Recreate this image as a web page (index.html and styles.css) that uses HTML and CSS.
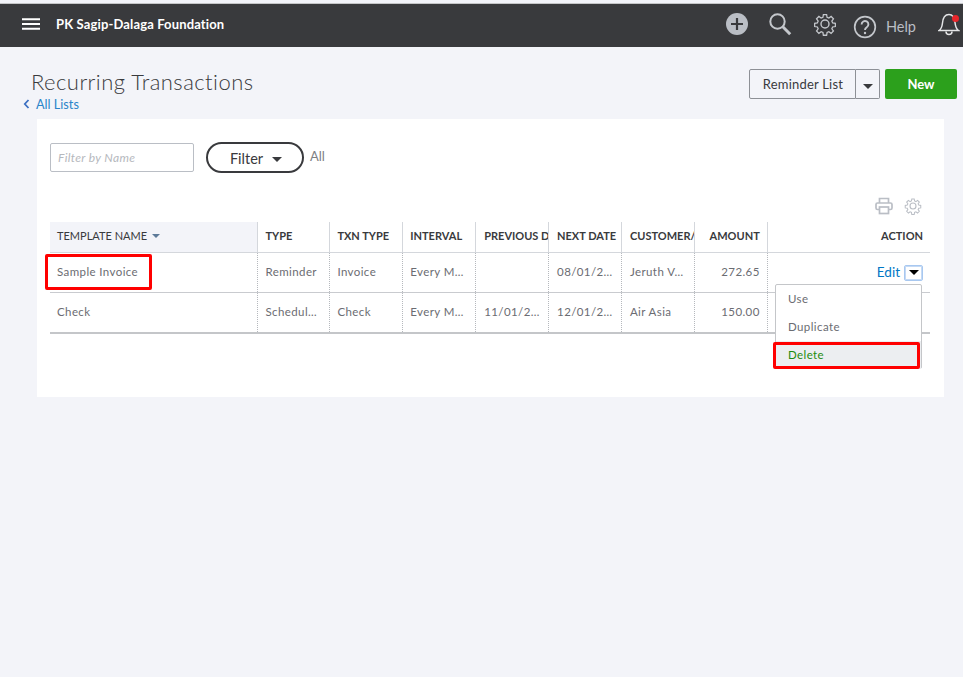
FILE: index.html
```html
<!DOCTYPE html>
<html lang="en">
<head>
<meta charset="utf-8">
<title>Recurring Transactions</title>
<link rel="stylesheet" href="styles.css">
</head>
<body>
<header class="topbar">
  <div class="brand">
    <svg class="burger" width="18" height="12" viewBox="0 0 18 12"><path d="M0 1.2h18M0 6h18M0 10.8h18" stroke="#fff" stroke-width="2"/></svg>
    <span class="company">PK Sagip-Dalaga Foundation</span>
  </div>
  <div class="tools">
    <svg class="ico-plus" width="24" height="24" viewBox="0 0 24 24"><circle cx="12" cy="12" r="11" fill="#babec5"/><path d="M12 6v12M6 12h12" stroke="#393a3d" stroke-width="2.2"/></svg>
    <svg class="ico-search" width="24" height="24" viewBox="0 0 24 24" fill="none" stroke="#c4c7cc"><circle cx="9.5" cy="9.5" r="7.2" stroke-width="2"/><path d="M14.8 14.8l7.4 7.4" stroke-width="3"/></svg>
    <svg class="ico-gear" width="24" height="24" viewBox="0 0 24 24" fill="none" stroke="#c4c7cc" stroke-width="1.4"><path d="M10.2 1.5h3.6l.5 3 2 .9 2.5-1.8 2.6 2.6-1.8 2.5.9 2 3 .5v3.6l-3 .5-.9 2 1.8 2.5-2.6 2.6-2.5-1.8-2 .9-.5 3h-3.6l-.5-3-2-.9-2.5 1.8-2.6-2.6 1.8-2.5-.9-2-3-.5v-3.6l3-.5.9-2-1.8-2.5 2.6-2.6 2.5 1.8 2-.9z" transform="translate(1.2 1.2) scale(.9)"/><circle cx="12" cy="12" r="4"/></svg>
    <svg class="ico-help" width="24" height="24" viewBox="0 0 24 24" fill="none" stroke="#c4c7cc"><circle cx="12" cy="12" r="10.3" stroke-width="1.7"/><path d="M8.6 9.4a3.4 3.4 0 1 1 5.2 2.9c-1.2.8-1.8 1.3-1.8 2.7" stroke-width="1.9"/><circle cx="12" cy="18" r="1.2" fill="#c4c7cc" stroke="none"/></svg>
    <span class="help">Help</span>
    <span class="bell">
      <svg width="22" height="24" viewBox="0 0 22 24" fill="none" stroke="#e4e5e7" stroke-width="1.5"><path d="M1 18.5c2.6-1.8 3-3.5 3.4-7C4.8 6 7 2.5 11 2.5c3.5 0 5.5 3 6 8 .4 4 1 6.3 3.5 8z"/><path d="M8 19.5c0 4 6 4 6 0"/></svg>
      <i class="dot"></i>
    </span>
  </div>
</header>

<main class="page">
  <div class="page-head">
    <div class="titles">
      <h1>Recurring Transactions</h1>
      <a class="back"><svg width="7" height="10" viewBox="0 0 7 10" fill="none"><path d="M5.5 1L1.8 5l3.7 4" stroke="#3b6fc2" stroke-width="1.8"/></svg>All Lists</a>
    </div>
    <div class="head-actions">
      <div class="split">
        <button class="split-main">Reminder List</button>
        <button class="split-caret"><i class="caret"></i></button>
      </div>
      <button class="new">New</button>
    </div>
  </div>

  <section class="panel">
    <div class="filters">
      <div class="name-filter">Filter by Name</div>
      <button class="filter-btn">Filter<i class="caret dark"></i></button>
      <span class="all">All</span>
    </div>
    <div class="table-tools">
      <svg width="18" height="18" viewBox="0 0 18 18" fill="none" stroke="#babec5" stroke-width="1.7"><path d="M4.5 6V1.5h9V6"/><rect x="1" y="6" width="16" height="6.5" rx="1.5"/><rect x="4.5" y="10" width="9" height="6.5" fill="#fff"/></svg>
      <svg width="18" height="18" viewBox="0 0 24 24" fill="none" stroke="#babec5" stroke-width="1.5"><path d="M10.2 1.5h3.6l.5 3 2 .9 2.5-1.8 2.6 2.6-1.8 2.5.9 2 3 .5v3.6l-3 .5-.9 2 1.8 2.5-2.6 2.6-2.5-1.8-2 .9-.5 3h-3.6l-.5-3-2-.9-2.5 1.8-2.6-2.6 1.8-2.5-.9-2-3-.5v-3.6l3-.5.9-2-1.8-2.5 2.6-2.6 2.5 1.8 2-.9z" transform="translate(1.2 1.2) scale(.9)"/><circle cx="12" cy="12" r="4"/></svg>
    </div>
    <div class="table-wrap">
      <table class="grid">
        <colgroup>
          <col class="c-name"><col class="c-std"><col class="c-std"><col class="c-std"><col class="c-std"><col class="c-std"><col class="c-std"><col class="c-std"><col>
        </colgroup>
        <thead>
          <tr>
            <th class="sorted">TEMPLATE NAME<i class="sort"></i></th>
            <th>TYPE</th><th>TXN TYPE</th><th>INTERVAL</th><th class="clip">PREVIOUS DATE</th><th>NEXT DATE</th><th class="clip">CUSTOMER/VENDOR</th>
            <th class="num">AMOUNT</th><th class="num">ACTION</th>
          </tr>
        </thead>
        <tbody>
          <tr>
            <td>Sample Invoice</td><td>Reminder</td><td>Invoice</td><td>Every M…</td><td></td><td>08/01/2…</td><td>Jeruth V…</td>
            <td class="num">272.65</td>
            <td class="action"><div class="act-row"><a class="edit">Edit</a><span class="act-caret"><i class="caret black"></i></span></div></td>
          </tr>
          <tr>
            <td>Check</td><td>Schedul…</td><td>Check</td><td>Every M…</td><td>11/01/2…</td><td>12/01/2…</td><td>Air Asia</td>
            <td class="num">150.00</td><td></td>
          </tr>
        </tbody>
      </table>
      <div class="mark mark-name"></div>
      <ul class="menu">
        <li>Use</li>
        <li>Duplicate</li>
        <li class="del">Delete</li>
      </ul>
      <div class="mark mark-del"></div>
    </div>
  </section>
</main>
</body>
</html>
```
FILE: styles.css
```css
* { box-sizing: border-box; }
html, body { margin: 0; height: 100%; }
body {
  background: #f3f4f9;
  font-family: Lato, "Open Sans", sans-serif;
  color: #393a3d;
  overflow: hidden;
}
button { font-family: inherit; }

.topbar {
  margin-top: 3px;
  height: 44px;
  padding-bottom: 3px;
  background: #393a3d;
  border-top: 1px solid #c5c6c8;
  display: flex;
  align-items: center;
  justify-content: space-between;
}
.brand { display: flex; align-items: center; padding-left: 22px; }
.burger { margin-right: 16px; }
.company { color: #fff; font-size: 13px; font-weight: 700; letter-spacing: .14px; }
.tools { display: flex; align-items: center; }
.ico-plus { margin-right: 19px; }
.ico-search { margin-right: 21px; }
.ico-gear { margin-right: 16px; }
.ico-help { margin-right: 9px; margin-top: 5px; }
.help { color: #babec5; font-size: 14.5px; margin-right: 22px; margin-top: 4px; }
.bell { position: relative; width: 24px; height: 24px; margin-right: 1px; }
.dot {
  position: absolute; left: 14px; top: 3px; width: 7px; height: 7px;
  border-radius: 50%; background: #e8262b;
}

.page { padding: 0 6px 0 0; }
.page-head {
  display: flex;
  justify-content: space-between;
  padding-top: 22px;
  height: 72px;
}
.titles { padding-left: 23px; }
h1 {
  margin: 0 0 0 8px;
  font-size: 22px;
  font-weight: 300;
  line-height: 26px;
  letter-spacing: .45px;
  color: #393a3d;
}
.back { display: flex; align-items: center; font-size: 12.7px; color: #2a84c9; line-height: 16px; margin-top: 1px; }
.back svg { margin-right: 6px; }
.head-actions { display: flex; gap: 5px; height: 30px; }
.split { display: flex; }
.split button {
  background: #f3f4f9; border: 1px solid #8d9096; height: 30px; color: #393a3d;
}
.split-main { width: 107px; font-size: 13px; border-radius: 2px 0 0 2px; letter-spacing: .2px; padding: 0 0 0 1px; }
.split-caret { width: 24px; border-left: 0 !important; border-radius: 0 2px 2px 0; padding: 0; }
.new {
  width: 72px; background: #2ca01c; color: #fff; border: 0; border-radius: 2px;
  font-size: 13px; font-weight: 700; padding: 0;
}

.caret {
  display: inline-block; width: 0; height: 0;
  border-left: 5px solid transparent; border-right: 5px solid transparent;
  border-top: 5px solid #393a3d;
}

.panel {
  margin-left: 37px;
  margin-right: 13px;
  width: 907px;
  height: 278px;
  background: #fff;
  padding: 24px 14px 0 13px;
}
.filters { display: flex; align-items: flex-start; height: 48px; }
.name-filter {
  width: 144px; height: 29px; border: 1px solid #babec5; border-radius: 2px;
  padding-left: 7px; font-size: 12px; letter-spacing: .35px; font-style: italic; color: #b5b8bd;
  line-height: 27px;
}
.filter-btn {
  margin-left: 12px; width: 98px; height: 31px; margin-top: -1px;
  background: #fff; border: 2px solid #393a3d; border-radius: 16px;
  font-size: 14.5px; color: #393a3d; padding: 1px 0 0 2px;
  display: flex; align-items: center; justify-content: center;
}
.filter-btn .caret { margin-left: 9px; margin-top: 2px; }
.all { margin-left: 6px; font-size: 13px; color: #7d7f84; line-height: 27px; }

.table-tools { display: flex; justify-content: flex-end; gap: 11px; height: 31px; padding-right: 8px; padding-top: 6px; }

.table-wrap { position: relative; width: 880px; }
.grid { width: 880px; border-collapse: collapse; table-layout: fixed; font-size: 11.5px; }
.c-name { width: 207px; }
.c-std { width: 72.9px; }
.grid th {
  height: 30px; padding: 0 7px 2px 8px; text-align: left; font-size: 11px; font-weight: 700;
  color: #393a3d; white-space: nowrap; overflow: hidden;
  border-bottom: 1px solid #d4d7dc; border-right: 1px solid #d4d7dc;
}
.grid th.clip { padding-right: 0; }
.grid th:last-child, .grid td:last-child { border-right: 0; }
.grid th.sorted { background: #f3f4f9; font-weight: 400; padding-left: 7px; }
.grid th.num, .grid td.num { text-align: right; }
.grid th:nth-child(3), .grid th:nth-child(4), .grid td:nth-child(3), .grid td:nth-child(4) { padding-left: 7px; }
.sort {
  display: inline-block; margin-left: 5px; vertical-align: 2px;
  border-left: 4px solid transparent; border-right: 4px solid transparent;
  border-top: 4px solid #5d7a99;
}
.grid td {
  height: 40px; padding: 0 7px 1px 8px; color: #6b6c72; letter-spacing: .4px;
  white-space: nowrap; overflow: hidden;
  border-bottom: 1px solid #c9cbcf; border-right: 1px dotted #b5b8bd;
}
.grid td:first-child { padding-left: 7px; }
.grid tbody tr:last-child td { height: 41px; border-bottom: 2px solid #c4c6c9; }
.grid td.action { overflow: visible; padding-right: 7px; }
.act-row { display: flex; justify-content: flex-end; align-items: center; }
.edit { color: #0077c5; font-size: 13.5px; letter-spacing: 0; }
.act-caret {
  display: inline-flex; align-items: center; justify-content: center;
  width: 19px; height: 16px; margin-left: 4px; margin-top: 2px;
  border: 1px solid #a8c8f0; border-radius: 2px;
  box-shadow: 0 0 0 1px #c5daf5 inset;
}
.caret.black { border-top-color: #000; }

.menu {
  position: absolute; left: 725px; top: 62px; width: 147px; height: 85px;
  margin: 0; padding: 0; list-style: none; background: #fff;
  border: 1px solid #c4c6c9; border-radius: 2px; font-size: 11.5px; color: #6b6c72; letter-spacing: .4px;
}
.menu li { height: 28px; line-height: 28px; padding-left: 12px; }
.menu li.del { background: #eceef1; color: #1e8c0f; }

.mark { position: absolute; border: 3px solid #f00; border-radius: 2px; pointer-events: none; }
.mark-name { left: -5px; top: 32px; width: 107px; height: 36px; }
.mark-del { left: 723px; top: 120px; width: 147px; height: 27px; }
```
